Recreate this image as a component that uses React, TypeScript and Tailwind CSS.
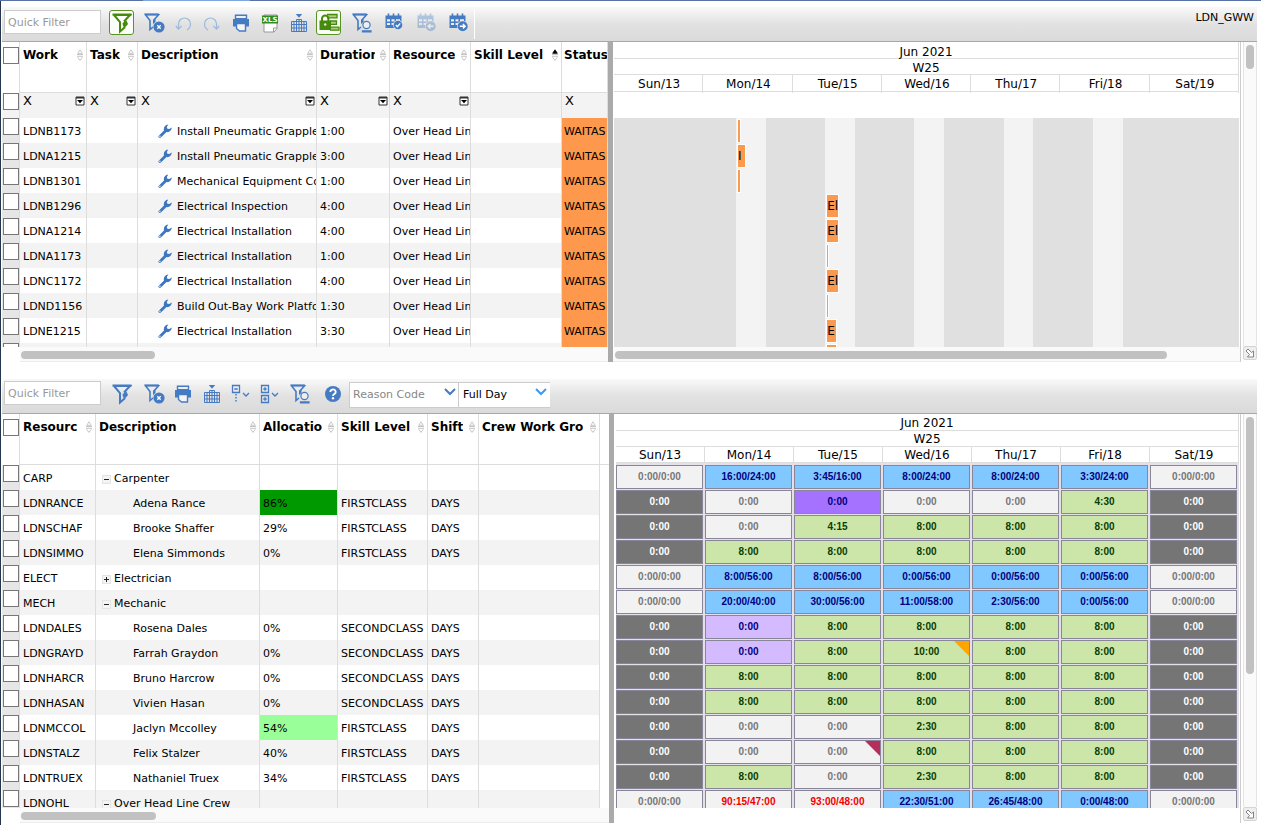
import React from "react";

/* ---------- icons ---------- */

const BLUE = "#457bc2";
const GREEN = "#458a0c";

function Svg({ children, faded }: { children: React.ReactNode; faded?: boolean }) {
  return (
    <svg viewBox="0 0 24 24" className={faded ? "size-6 shrink-0 opacity-35" : "size-6 shrink-0"} fill="none" aria-hidden="true">
      {children}
    </svg>
  );
}

function FilterIcon({ color = BLUE }: { color?: string }) {
  return (
    <Svg>
      <path d="M4 4h16L14 10.500M4 4l6 7v9.500l4.500-4v-2" stroke={color} strokeWidth="2" />
      <path d="M2.500 2.500h19v2.200h-19z" fill={color} />
      <path d="M12.500 12l4-2.500 1.500 3.500-2 2.500-3-.5z" fill={color} />
    </Svg>
  );
}

function SmallFunnel() {
  return (
    <>
      <path d="M3 3.800h13.500L11.500 9.500M3.500 3.800 8 9.500v9l3-2.500" stroke={BLUE} strokeWidth="1.600" />
      <path d="M2.400 2.400h14.400v1.800H2.400z" fill={BLUE} />
      <path d="M11 9l2.500-1v3l-2.500 2z" fill={BLUE} />
    </>
  );
}

function FilterClearIcon() {
  return (
    <Svg>
      <SmallFunnel />
      <circle cx="17" cy="16" r="5.600" fill={BLUE} />
      <path d="m15.300 14.300 3.400 3.400m0-3.400-3.400 3.400" stroke="#fff" strokeWidth="1.300" />
    </Svg>
  );
}

function FilterPersonIcon() {
  return (
    <Svg>
      <SmallFunnel />
      <circle cx="16.500" cy="14" r="3.600" fill="#eee" stroke={BLUE} strokeWidth="1.200" />
      <path d="M12.500 19.800H21v1.200h-8.500z" stroke={BLUE} strokeWidth="1.200" />
    </Svg>
  );
}

function UndoIcon({ flip }: { flip?: boolean }) {
  return (
    <Svg>
      <g transform={flip ? "matrix(-1 0 0 1 24 0)" : undefined} stroke="#9db9dc" strokeWidth="1.200">
        <path d="M7.500 18v-5a6 6 0 0 1 12 0c0 3-1 4.500-3.500 6" />
        <path d="m4.800 15 2.700 3.200L10.500 15" />
      </g>
    </Svg>
  );
}

function PrinterIcon() {
  return (
    <Svg>
      <path d="M6.500 4.300h11v3.500h-11z" stroke={BLUE} strokeWidth="1.400" fill="#eee" />
      <path d="M4 8h16v7.500h-3V12H7v3.500H4z" fill={BLUE} />
      <path d="M7.500 12.500h9v7.500h-6l-3-2.500z" fill="#f4f4f4" stroke={BLUE} strokeWidth="1.400" />
    </Svg>
  );
}

function XlsIcon() {
  return (
    <Svg>
      <path d="M6 4h13v13.500l-3 3.500H6z" fill="#fff" stroke="#999" />
      <path d="M15.500 21v-4H19" stroke="#999" />
      <path d="M4 4.500h16v8H4z" fill="#2e8b1e" />
      <text x="12" y="11" textAnchor="middle" fontSize="7" fontWeight="700" fill="#fff" fontFamily="DejaVu Sans, sans-serif">XLS</text>
    </Svg>
  );
}

function GridDownIcon() {
  return (
    <Svg>
      <path d="M8.800 3h6.400L12 6.700z" fill={BLUE} />
      <path d="M4.500 10.500h15v10h-15zM9.500 8.500h5v12h-5zM4.500 13.500h15M4.500 17h15M7 10.500v10M12 8.500v12M17 10.500v10" stroke={BLUE} />
    </Svg>
  );
}

function LockListIcon() {
  return (
    <Svg>
      <path d="M10 3.500h10v3.300H10M13 10h6.500v3.300H13M13 16.200h9v3h-9" fill="#a9cd7c" stroke={GREEN} strokeWidth="1.300" />
      <path d="M2.500 9.500H14V19H2.500z" fill={GREEN} />
      <path d="M5 10V7.800a3.200 3.200 0 0 1 6.400 0V10" stroke={GREEN} strokeWidth="2" />
      <circle cx="8.200" cy="13.500" r="1.300" fill="#dcebc8" />
    </Svg>
  );
}

function CalendarIcon({ mark, faded }: { mark: "check" | "left" | "right"; faded?: boolean }) {
  return (
    <Svg faded={faded}>
      <path d="M3.500 4.500h16v12.500h-16z" fill={BLUE} />
      <path d="M5 8.300h3v2.200H5zM9.500 8.300h3v2.200h-3zM14 8.300h4v2.200h-4zM5 12h3v2H5zM9.500 12h3v2h-3z" fill="#eee" />
      <path d="M6.500 2.500v4M11.500 2.500v4M16.500 2.500v4" stroke={BLUE} strokeWidth="1.600" />
      {mark === "check" ? (
        <>
          <circle cx="16" cy="14" r="4.900" fill="#e4e4e4" />
          <circle cx="16" cy="14" r="4.300" fill={BLUE} />
          <path d="m13.800 14 1.600 1.700 2.800-3.300" stroke="#fff" strokeWidth="1.300" />
        </>
      ) : (
        <>
          <circle cx="16.700" cy="15.200" r="5.600" fill="#e4e4e4" />
          <circle cx="16.700" cy="15.200" r="5" fill={BLUE} />
          <path d={mark === "left" ? "M19.700 15.200h-5.500m2.300-2.300-2.300 2.300 2.300 2.300" : "M13.700 15.200h5.500m-2.300-2.300 2.300 2.300-2.300 2.300"} stroke="#fff" strokeWidth="1.400" />
        </>
      )}
    </Svg>
  );
}

function CollapseIcon() {
  return (
    <Svg>
      <path d="M3.500 3.500h7v7h-7zM5.300 7h3.400M14 11l3 3 3-3" stroke={BLUE} strokeWidth="1.300" />
      <path d="M7 12v9" stroke={BLUE} strokeWidth="1.500" strokeDasharray="1.500 1.500" />
    </Svg>
  );
}

function ExpandIcon() {
  return (
    <Svg>
      <path d="M3.500 3.500h7v7h-7zM3.500 13.500h7v7h-7zM5.300 7h3.400M7 5.300v3.400M5.300 17h3.400M7 15.300v3.400M14 11l3 3 3-3" stroke={BLUE} strokeWidth="1.300" />
    </Svg>
  );
}

function HelpIcon() {
  return (
    <Svg>
      <circle cx="13" cy="12" r="8" fill={BLUE} />
      <path d="M10.300 10a2.700 2.500 0 1 1 4.200 2c-1 .7-1.500 1-1.500 2" stroke="#fff" strokeWidth="1.900" />
      <circle cx="13" cy="16.300" r="1.200" fill="#fff" />
    </Svg>
  );
}

function WrenchIcon() {
  return (
    <svg viewBox="0 0 14 14" className="size-[14px] shrink-0" aria-hidden="true">
      <path d="M.5 12 6 6.500C5.300 4 6.500 1 10.300.5L8.800 3l.6 1.800 1.900.3L13.700 3.400C14 6 11.500 8.700 8.500 8.100L2.900 13.500c-1.600.8-2.900-.1-2.400-1.500z" fill="#3d76c0" />
      <circle cx="1.900" cy="12.300" r=".8" fill="#dce9f8" />
    </svg>
  );
}

function SortIcon({ active }: { active?: boolean }) {
  return (
    <svg viewBox="0 0 6 12" className="h-3 w-[6px] shrink-0" fill="none" aria-hidden="true">
      <path d="M.7 4.300 3 .8l2.300 3.500z" stroke={active ? "#000" : "#bbb"} fill={active ? "#000" : "none"} strokeWidth=".8" />
      <path d="M0 5.500h6M0 7.300h6M.7 8.300 3 11.400l2.300-3.100" stroke="#b5b5b5" strokeWidth=".8" />
    </svg>
  );
}

function Chevron({ color }: { color: string }) {
  return (
    <svg viewBox="0 0 12 8" className="pointer-events-none absolute top-[7px] right-[3px] h-2 w-3" fill="none" aria-hidden="true">
      <path d="m1 1 5 5 5-5" stroke={color} strokeWidth="2" />
    </svg>
  );
}

/* ---------- shared parts ---------- */

function ToolButton({ label, kind = "normal", children }: { label: string; kind?: "normal" | "wide" | "lead" | "active"; children: React.ReactNode }) {
  const styles = {
    normal: "w-[29px] h-[25px]",
    wide: "w-8 h-[25px]",
    lead: "w-[25px] h-[25px]",
    active: "w-[25px] h-[25px] rounded-[3px] border border-[#5b9323] bg-[#fbfdf8]",
  };
  return (
    <button type="button" aria-label={label} title={label} className={`flex shrink-0 items-center justify-center ${styles[kind]}`}>
      {children}
    </button>
  );
}

function Toolbar({ name, tight, children }: { name: string; tight?: boolean; children: React.ReactNode }) {
  return (
    <div
      role="toolbar"
      aria-label={name}
      className={`flex h-[35px] shrink-0 items-start border-b border-[#a8a8a8] bg-linear-to-b from-[#f9f9f9] from-0% via-[#e2e2e2] via-50% to-[#dadada] pl-[2px] ${tight ? "pt-[2px]" : "pt-[3px]"}`}
    >
      <input
        aria-label={`${name} quick filter`}
        placeholder="Quick Filter"
        className="h-6 w-[97px] shrink-0 border border-[#ccc] bg-white px-[3px] text-[11px] placeholder:text-[#999] focus:outline-none"
      />
      <div className="w-2 shrink-0" />
      {children}
    </div>
  );
}

function Tick({ label }: { label: string }) {
  return <input type="checkbox" aria-label={label} className="ml-px block h-[17px] w-4 appearance-none border border-[#777] bg-white checked:bg-[#457bc2]" />;
}

function HorizontalBar({ thumb }: { thumb: string }) {
  return (
    <div className="h-[15px] shrink-0 border-b border-[#ececec] bg-[#fafafa] pt-1">
      <div className={`h-2 rounded-full bg-[#c1c1c1] ${thumb}`} />
    </div>
  );
}

function VerticalBar({ thumb }: { thumb: string }) {
  return (
    <div className="flex w-[17px] shrink-0 flex-col border-l border-[#ccc] pl-[2px]">
      <div className="flex-1 border-x border-[#e4e4e4] bg-[#fafafa] pt-[3px] pl-[2px]">
        <div className={`w-2 rounded-full bg-[#c1c1c1] ${thumb}`} />
      </div>
      <button type="button" aria-label="Resize panel" className="mb-[2px] flex size-[14px] items-center justify-center rounded-[2px] border border-[#d4d4d4] bg-[#eee]">
        <svg viewBox="0 0 10 10" className="size-[10px]" fill="#fff" stroke="#777" strokeWidth=".9" aria-hidden="true">
          <path d="M1 3 3 1l3.500 3.500L8.500 3v6h-6L4.500 6.500z" />
        </svg>
      </button>
    </div>
  );
}

type Column = { name: string; width: string; sort?: boolean; sorted?: boolean; clear?: boolean; menu?: boolean };

function HeadCell({ column }: { column: Column }) {
  return (
    <th className="h-[51px] overflow-hidden border-r border-b border-[#ddd] p-0 pt-[5px] align-top font-bold">
      <div className={column.sort ? "flex items-start justify-between pr-[3px] pl-[3px]" : "flex items-start pl-[2px]"}>
        <span className="min-w-0 overflow-hidden text-left text-[12px] leading-4 whitespace-nowrap">{column.name}</span>
        {column.sort && (
          <span className="flex h-4 w-[11px] shrink-0 items-center justify-end">
            <SortIcon active={column.sorted} />
          </span>
        )}
      </div>
    </th>
  );
}

const CELL = "overflow-hidden border-r border-[#ddd] pt-1 pr-0 pb-0 pl-[3px]";

const DAYS = ["Sun/13", "Mon/14", "Tue/15", "Wed/16", "Thu/17", "Fri/18", "Sat/19"];

/* ---------- work panel ---------- */

const WORK_COLUMNS: Column[] = [
  { name: "Work", width: "w-[67px]", sort: true, clear: true, menu: true },
  { name: "Task", width: "w-[51px]", sort: true, clear: true, menu: true },
  { name: "Description", width: "w-[179px]", sort: true, clear: true, menu: true },
  { name: "Duration", width: "w-[73px]", sort: true, clear: true, menu: true },
  { name: "Resource", width: "w-[81px]", sort: true, clear: true, menu: true },
  { name: "Skill Level", width: "w-[91px]", sort: true, sorted: true },
  { name: "Status", width: "w-[46px]", clear: true },
];

type Work = { id: string; text: string; duration: string; day: number; hours: number; label: string };

const WORK: Work[] = [
  { id: "LDNB1173", text: "Install Pneumatic Grapple", duration: "1:00", day: 1, hours: 0.6, label: "" },
  { id: "LDNA1215", text: "Install Pneumatic Grapple", duration: "3:00", day: 1, hours: 1.9, label: "I" },
  { id: "LDNB1301", text: "Mechanical Equipment Co", duration: "1:00", day: 1, hours: 0.6, label: "" },
  { id: "LDNB1296", text: "Electrical Inspection", duration: "4:00", day: 2, hours: 3, label: "El" },
  { id: "LDNA1214", text: "Electrical Installation", duration: "4:00", day: 2, hours: 3, label: "El" },
  { id: "LDNA1173", text: "Electrical Installation", duration: "1:00", day: 2, hours: 0.3, label: "" },
  { id: "LDNC1172", text: "Electrical Installation", duration: "4:00", day: 2, hours: 3, label: "El" },
  { id: "LDND1156", text: "Build Out-Bay Work Platfo", duration: "1:30", day: 2, hours: 0.3, label: "" },
  { id: "LDNE1215", text: "Electrical Installation", duration: "3:30", day: 2, hours: 2.4, label: "E" },
  { id: "", text: "", duration: "", day: 2, hours: 2.4, label: "" },
];

const SHIFT_START = 8.75;
const BAR_START = 9.3;
const percent = (day: number, hour: number) => `${((day + hour / 24) / 7) * 100}%`;

function WorkTable() {
  return (
    <table className="w-full table-fixed border-separate border-spacing-0 text-[11px] whitespace-nowrap">
      <colgroup>
        <col className="w-[18px]" />
        {WORK_COLUMNS.map((c) => (
          <col key={c.name} className={c.width} />
        ))}
      </colgroup>
      <thead>
        <tr>
          <th className="border-r border-[#ddd] p-0 pt-[5px] align-top">
            <Tick label="Select all work" />
          </th>
          {WORK_COLUMNS.map((c) => (
            <HeadCell key={c.name} column={c} />
          ))}
        </tr>
        <tr className="bg-[#f3f3f3]">
          <th className="h-[25px] border-r border-[#ddd] p-0 align-top">
            <Tick label="Select filtered work" />
          </th>
          {WORK_COLUMNS.map((c) => (
            <th key={c.name} className="border-r border-[#ddd] p-0 align-top font-normal">
              <div className="flex items-center justify-between pr-px pl-[3px]">
                {c.clear && (
                  <button type="button" aria-label={`Clear ${c.name} filter`} className="text-[13px] leading-4">X</button>
                )}
                {c.menu && (
                  <button type="button" aria-label={`${c.name} filter options`} className="flex h-[15px] items-center">
                    <svg viewBox="0 0 10 10" className="size-[10px]" aria-hidden="true">
                      <path d="M1 1h8v8H1z" fill="#fff" stroke="#333" />
                      <path d="M1 1h8v1.500H1z" fill="#333" />
                      <path d="M2 4h6L5 7.300z" fill="#000" />
                    </svg>
                  </button>
                )}
              </div>
            </th>
          ))}
        </tr>
      </thead>
      <tbody>
        {WORK.map((w, i) => (
          <tr key={i} className="h-[25px] even:bg-[#f3f3f3]">
            <td className="border-r border-[#ddd] bg-[#e6e6e6] p-0 align-top">
              <Tick label={`Select ${w.id || "next work"}`} />
            </td>
            <td className={CELL}>{w.id}</td>
            <td className={CELL} />
            <td className={CELL}>
              {w.text && (
                <span className="flex items-start gap-[5px] pl-[17px]">
                  <WrenchIcon />
                  {w.text}
                </span>
              )}
            </td>
            <td className={CELL}>{w.duration}</td>
            <td className={CELL}>{w.id && "Over Head Line"}</td>
            <td className={CELL} />
            <td className="overflow-hidden border-r border-[#ddd] bg-[#fd984d] pt-1 pr-0 pb-0 pl-[2px]">{w.id && "WAITAS"}</td>
          </tr>
        ))}
      </tbody>
    </table>
  );
}

function Gantt() {
  return (
    <div className="flex min-h-0 flex-1 flex-col pr-px pl-px">
      <div className="h-[17px] shrink-0 border-r border-b border-[#ddd] pt-[2px] text-center text-[12px] leading-4">Jun 2021</div>
      <div className="h-4 shrink-0 border-r border-b border-[#ddd] pt-px text-center text-[12px] leading-4">W25</div>
      <div className="grid h-[17px] shrink-0 grid-cols-7 border-b border-[#ddd] text-center text-[12px] leading-[18px]">
        {DAYS.map((d) => (
          <div key={d} className="border-r border-[#ddd] pl-[2px]">{d}</div>
        ))}
      </div>
      <div className="h-[26px] shrink-0" />
      <div className="relative min-h-0 flex-1 overflow-hidden bg-[#e0e0e0]">
        {[1, 2, 3, 4, 5].map((day) => (
          <div key={day} className="absolute inset-y-0 bg-[#f3f3f3]" style={{ left: percent(day, SHIFT_START), width: percent(0, 8) }} />
        ))}
        <div className="relative">
          {WORK.map((w, i) => (
            <div key={i} className="relative h-[25px]">
              <div
                className="absolute top-[2px] h-[22px] overflow-hidden bg-[#fb994f] text-[12px] leading-[22px] outline outline-white"
                style={{ left: percent(w.day, BAR_START), width: percent(0, w.hours) }}
              >
                {w.label}
              </div>
            </div>
          ))}
        </div>
      </div>
    </div>
  );
}

/* ---------- resource panel ---------- */

const CREW_COLUMNS: Column[] = [
  { name: "Resourc", width: "w-[76px]", sort: true },
  { name: "Description", width: "w-[164px]", sort: true },
  { name: "Allocatio", width: "w-[78px]", sort: true },
  { name: "Skill Level", width: "w-[90px]", sort: true },
  { name: "Shift", width: "w-[51px]", sort: true },
  { name: "Crew Work Gro", width: "w-[121px]", sort: true },
];

type Crew = { id: string; text: string; group?: "open" | "closed"; alloc?: string; skill?: string; days: string[] };

/* Each day is "value tone", with an optional corner flag colour. */
const CREW: Crew[] = [
  { id: "CARP", text: "Carpenter", group: "open", days: ["0:00/0:00 idle", "16:00/24:00 sum", "3:45/16:00 sum", "8:00/24:00 sum", "8:00/24:00 sum", "3:30/24:00 sum", "0:00/0:00 idle"] },
  { id: "LDNRANCE", text: "Adena Rance", alloc: "86%", skill: "FIRSTCLASS", days: ["0:00 off", "0:00 idle", "0:00 leave", "0:00 idle", "0:00 idle", "4:30 free", "0:00 off"] },
  { id: "LDNSCHAF", text: "Brooke Shaffer", alloc: "29%", skill: "FIRSTCLASS", days: ["0:00 off", "0:00 idle", "4:15 free", "8:00 free", "8:00 free", "8:00 free", "0:00 off"] },
  { id: "LDNSIMMO", text: "Elena Simmonds", alloc: "0%", skill: "FIRSTCLASS", days: ["0:00 off", "8:00 free", "8:00 free", "8:00 free", "8:00 free", "8:00 free", "0:00 off"] },
  { id: "ELECT", text: "Electrician", group: "closed", days: ["0:00/0:00 idle", "8:00/56:00 sum", "8:00/56:00 sum", "0:00/56:00 sum", "0:00/56:00 sum", "0:00/56:00 sum", "0:00/0:00 idle"] },
  { id: "MECH", text: "Mechanic", group: "open", days: ["0:00/0:00 idle", "20:00/40:00 sum", "30:00/56:00 sum", "11:00/58:00 sum", "2:30/56:00 sum", "0:00/56:00 sum", "0:00/0:00 idle"] },
  { id: "LDNDALES", text: "Rosena Dales", alloc: "0%", skill: "SECONDCLASS", days: ["0:00 off", "0:00 away", "8:00 free", "8:00 free", "8:00 free", "8:00 free", "0:00 off"] },
  { id: "LDNGRAYD", text: "Farrah Graydon", alloc: "0%", skill: "SECONDCLASS", days: ["0:00 off", "0:00 away", "8:00 free", "10:00 free orange", "8:00 free", "8:00 free", "0:00 off"] },
  { id: "LDNHARCR", text: "Bruno Harcrow", alloc: "0%", skill: "SECONDCLASS", days: ["0:00 off", "8:00 free", "8:00 free", "8:00 free", "8:00 free", "8:00 free", "0:00 off"] },
  { id: "LDNHASAN", text: "Vivien Hasan", alloc: "0%", skill: "SECONDCLASS", days: ["0:00 off", "8:00 free", "8:00 free", "8:00 free", "8:00 free", "8:00 free", "0:00 off"] },
  { id: "LDNMCCOL", text: "Jaclyn Mccolley", alloc: "54%", skill: "FIRSTCLASS", days: ["0:00 off", "0:00 idle", "0:00 idle", "2:30 free", "8:00 free", "8:00 free", "0:00 off"] },
  { id: "LDNSTALZ", text: "Felix Stalzer", alloc: "40%", skill: "FIRSTCLASS", days: ["0:00 off", "0:00 idle", "0:00 idle #b52f5d", "8:00 free", "8:00 free", "8:00 free", "0:00 off"] },
  { id: "LDNTRUEX", text: "Nathaniel Truex", alloc: "34%", skill: "FIRSTCLASS", days: ["0:00 off", "8:00 free", "0:00 idle", "2:30 free", "8:00 free", "8:00 free", "0:00 off"] },
  { id: "LDNOHL", text: "Over Head Line Crew", group: "open", days: ["0:00/0:00 idle", "90:15/47:00 over", "93:00/48:00 over", "22:30/51:00 sum", "26:45/48:00 sum", "0:00/48:00 sum", "0:00/0:00 idle"] },
];

const TONES: Record<string, string> = {
  idle: "bg-[#f2f2f2] text-[#777]",
  sum: "bg-[#80c8ff] text-[#000080]",
  off: "bg-[#757575] text-white",
  free: "bg-[#cce6a9] text-[#0a3d00]",
  leave: "bg-[#a571ff] text-[#000080]",
  away: "bg-[#d4baff] text-[#000080]",
  over: "bg-[#f2f2f2] text-[#f00000]",
};

function allocationTone(alloc?: string) {
  if (alloc === "86%") return "bg-[#009900]";
  if (alloc === "54%") return "bg-[#99ff99]";
  return "";
}

function CrewTable() {
  return (
    <table className="w-full table-fixed border-separate border-spacing-0 text-[11px] whitespace-nowrap">
      <colgroup>
        <col className="w-[18px]" />
        {CREW_COLUMNS.map((c) => (
          <col key={c.name} className={c.width} />
        ))}
        <col />
      </colgroup>
      <thead>
        <tr>
          <th className="border-r border-[#ddd] p-0 pt-[5px] align-top">
            <Tick label="Select all resources" />
          </th>
          {CREW_COLUMNS.map((c) => (
            <HeadCell key={c.name} column={c} />
          ))}
          <th className="border-b border-[#ddd] p-0" />
        </tr>
      </thead>
      <tbody>
        {CREW.map((r, i) => {
          const stripe = i % 2 ? "bg-[#f3f3f3]" : "";
          return (
            <tr key={r.id} className="h-[25px]">
              <td className="border-r border-[#ddd] bg-[#e6e6e6] p-0 align-top">
                <Tick label={`Select ${r.id}`} />
              </td>
              <td className={`${CELL} ${stripe}`}>{r.id}</td>
              <td className={`${CELL} ${stripe}`}>
                {r.group ? (
                  <span className="flex items-center gap-[3px] pl-[3px]">
                    <button type="button" aria-label={`Toggle ${r.text}`} className="flex size-[9px] items-center justify-center border border-[#e4e4e4] bg-[#f4f4f4]">
                      <svg viewBox="0 0 5 5" className="size-[5px]" aria-hidden="true">
                        <path d={r.group === "open" ? "M0 2h5v1H0z" : "M0 2h2V0h1v2h2v1H3v2H2V3H0z"} fill="#222" />
                      </svg>
                    </button>
                    {r.text}
                  </span>
                ) : (
                  <span className="pl-[34px]">{r.text}</span>
                )}
              </td>
              <td className={`${CELL} ${allocationTone(r.alloc) || stripe}`}>{r.alloc}</td>
              <td className={`${CELL} ${stripe}`}>{r.skill}</td>
              <td className={`${CELL} ${stripe}`}>{r.skill && "DAYS"}</td>
              <td className={`${CELL} ${stripe}`} />
              <td className="p-0" />
            </tr>
          );
        })}
      </tbody>
    </table>
  );
}

function CrewCalendar() {
  return (
    <div className="min-h-0 flex-1 overflow-hidden pr-px pl-[2px]">
      <table className="w-full table-fixed border-separate border-spacing-0 text-center">
        <thead className="text-[12px]">
          <tr>
            <th colSpan={7} className="h-[17px] border-r border-b border-[#ddd] p-0 pt-[3px] leading-[13px] font-normal">Jun 2021</th>
          </tr>
          <tr>
            <th colSpan={7} className="h-4 border-r border-b border-[#ddd] p-0 pt-[2px] leading-[13px] font-normal">W25</th>
          </tr>
          <tr>
            {DAYS.map((d) => (
              <th key={d} className="h-4 border-r border-b border-[#ddd] p-0 pt-[2px] leading-[13px] font-normal">{d}</th>
            ))}
          </tr>
          <tr>
            <td colSpan={7} className="h-[2px] bg-[#e4dfe9] p-0" />
          </tr>
        </thead>
        <tbody className="bg-[#e4dfe9] text-[10px] font-bold [font-family:'Liberation_Sans',Arial,sans-serif]">
          {CREW.map((r) => (
            <tr key={r.id}>
              {r.days.map((entry, d) => {
                const [value, tone, flag] = entry.split(" ");
                return (
                  <td key={d} className="h-[25px] p-0 align-top">
                    <div className={`relative mr-[2px] h-6 border border-[#8a869a] leading-[22px] ${TONES[tone]}`}>
                      {value}
                      {flag && (
                        <svg viewBox="0 0 15 15" className="absolute top-0 right-0 size-[15px]" aria-hidden="true">
                          <path d="M0 0h15v15z" fill={flag} />
                        </svg>
                      )}
                    </div>
                  </td>
                );
              })}
            </tr>
          ))}
        </tbody>
      </table>
    </div>
  );
}

/* ---------- page ---------- */

export default function App() {
  return (
    <div className="flex h-screen flex-col overflow-hidden bg-white text-black [font-family:Verdana,'DejaVu_Sans',sans-serif]">
      <div className="flex h-px shrink-0 bg-[#5872a5] pl-[143px]">
        <div className="w-[107px] bg-[#7fa6de]" />
      </div>
      <div className="flex min-h-0 flex-1 flex-col border-l border-[#26344f] pt-[6px] pr-1 pl-px">
        <Toolbar name="Work">
          <ToolButton label="Filter" kind="active"><FilterIcon color={GREEN} /></ToolButton>
          <div className="w-[5px] shrink-0" />
          <ToolButton label="Clear filter"><FilterClearIcon /></ToolButton>
          <ToolButton label="Undo"><UndoIcon /></ToolButton>
          <ToolButton label="Redo"><UndoIcon flip /></ToolButton>
          <ToolButton label="Print"><PrinterIcon /></ToolButton>
          <ToolButton label="Export to spreadsheet"><XlsIcon /></ToolButton>
          <ToolButton label="Columns"><GridDownIcon /></ToolButton>
          <div className="w-[3px] shrink-0" />
          <ToolButton label="Lock schedule" kind="active"><LockListIcon /></ToolButton>
          <div className="w-[5px] shrink-0" />
          <ToolButton label="Filter by resource" kind="wide"><FilterPersonIcon /></ToolButton>
          <ToolButton label="Confirm dates" kind="wide"><CalendarIcon mark="check" /></ToolButton>
          <ToolButton label="Previous period" kind="wide"><CalendarIcon mark="left" faded /></ToolButton>
          <ToolButton label="Next period" kind="wide"><CalendarIcon mark="right" /></ToolButton>
          <div className="h-[29px] w-px shrink-0 bg-white" />
          <span className="ml-auto pr-[3px] text-[11px] leading-[15px]">LDN_GWW</span>
        </Toolbar>

        <section aria-label="Work" className="flex h-[320px] shrink-0">
          <div className="flex w-[606px] shrink-0 flex-col">
            <div className="min-h-0 flex-1 overflow-hidden"><WorkTable /></div>
            <div className="pl-[18px]"><HorizontalBar thumb="ml-px w-[134px]" /></div>
          </div>
          <div className="w-[5px] shrink-0 bg-[#aaa]" />
          <div className="flex min-w-0 flex-1 flex-col">
            <Gantt />
            <HorizontalBar thumb="ml-[2px] w-[88%]" />
          </div>
          <VerticalBar thumb="h-6" />
        </section>

        <div className="h-[17px] shrink-0" />

        <Toolbar name="Resources" tight>
          <ToolButton label="Filter" kind="lead"><FilterIcon /></ToolButton>
          <div className="w-[5px] shrink-0" />
          <ToolButton label="Clear filter"><FilterClearIcon /></ToolButton>
          <ToolButton label="Print"><PrinterIcon /></ToolButton>
          <ToolButton label="Columns"><GridDownIcon /></ToolButton>
          <ToolButton label="Collapse"><CollapseIcon /></ToolButton>
          <ToolButton label="Expand"><ExpandIcon /></ToolButton>
          <ToolButton label="Filter by resource" kind="wide"><FilterPersonIcon /></ToolButton>
          <ToolButton label="Help" kind="wide"><HelpIcon /></ToolButton>
          <div className="relative ml-px shrink-0">
            <select aria-label="Reason Code" className="h-[26px] w-[110px] appearance-none border border-[#ccc] bg-white px-[3px] text-[11px] text-[#888]">
              <option>Reason Code</option>
            </select>
            <Chevron color={BLUE} />
          </div>
          <div className="relative shrink-0">
            <select aria-label="Day span" className="h-[26px] w-[91px] appearance-none border-y border-[#ccc] bg-white px-1 text-[11px]">
              <option>Full Day</option>
            </select>
            <Chevron color="#3f97f2" />
          </div>
        </Toolbar>

        <section aria-label="Resources" className="flex min-h-0 flex-1 pb-[2px]">
          <div className="flex w-[607px] shrink-0 flex-col">
            <div className="min-h-0 flex-1 overflow-hidden"><CrewTable /></div>
            <div className="pl-[18px]"><HorizontalBar thumb="ml-px w-[135px]" /></div>
          </div>
          <div className="w-[5px] shrink-0 bg-[#aaa]" />
          <div className="flex min-w-0 flex-1 flex-col pb-[15px]">
            <CrewCalendar />
          </div>
          <VerticalBar thumb="h-[257px]" />
        </section>
      </div>
    </div>
  );
}
